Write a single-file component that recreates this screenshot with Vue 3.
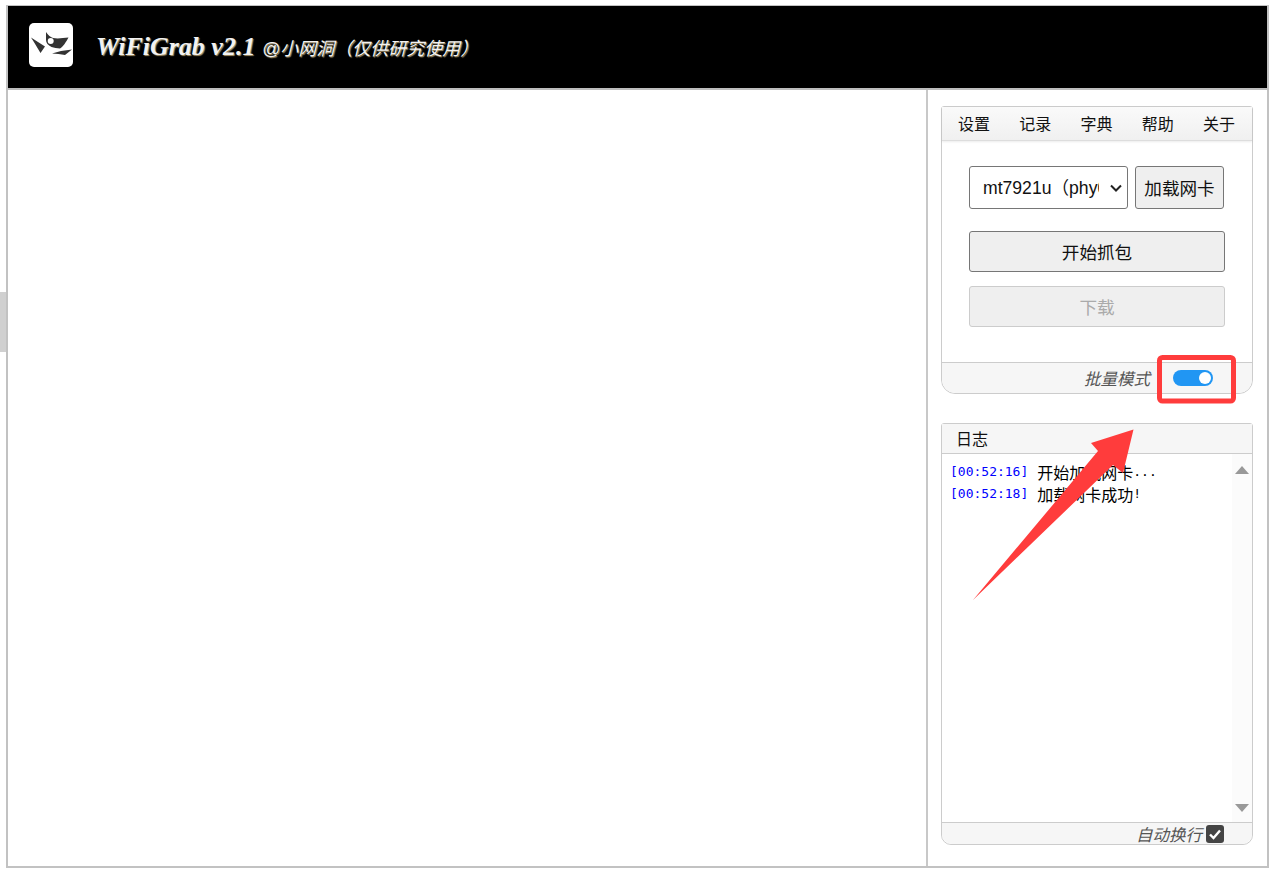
<script setup>
const tabs = ['设置', '记录', '字典', '帮助', '关于']
const logs = [
  { time: '[00:52:16]', msg: '开始加载网卡', tail: '...' },
  { time: '[00:52:18]', msg: '加载网卡成功', tail: '!' }
]
</script>

<template>
  <div class="page">
    <div class="frame">
      <header class="header">
        <div class="logo">
          <svg width="44" height="44" viewBox="0 0 44 44">
            <path fill="#333" d="M2 14.500 L16 23.500 L11.500 30 C8 24 5 19 2 14.500 Z" />
            <path fill="#333" d="M17 9 C19 12 21 14 24 15 C29 16 34 15 39.500 14.500 C37 19 34 24 31 25.500 C28 25 25 25 22.500 24 C19 22 17 20 17 17 Z" />
            <circle cx="21.700" cy="18" r="3" fill="#fff" />
            <path fill="#333" d="M23 30.500 L32 28 L43 26.500 L36 32 C32 31 27 31 23 30.500 Z" />
          </svg>
        </div>
        <h1 class="title">WiFiGrab v2.1 <small>@小网洞（仅供研究使用）</small></h1>
      </header>
      <div class="body">
        <main class="main"></main>
        <aside class="side">
          <section class="panel control">
            <nav class="tabs">
              <span v-for="t in tabs" :key="t">{{ t }}</span>
            </nav>
            <div class="control-body">
              <div class="row">
                <div class="select-wrap">
                  <select class="select">
                    <option>mt7921u（phy0）</option>
                  </select>
                  <svg class="chevron" width="12" height="8" viewBox="0 0 12 8"><path d="M1 1.500 L6 6.500 L11 1.500" fill="none" stroke="#222" stroke-width="2" /></svg>
                </div>
                <button class="btn load">加载网卡</button>
              </div>
              <button class="btn wide">开始抓包</button>
              <button class="btn wide disabled" disabled>下载</button>
            </div>
            <footer class="panel-foot batch">
              <em>批量模式</em>
              <span class="switch"><i></i></span>
            </footer>
          </section>
          <section class="panel log">
            <div class="log-head">日志</div>
            <div class="log-body">
              <div class="log-lines">
                <div v-for="l in logs" :key="l.time" class="line"><span class="mono time">{{ l.time }}</span><span class="msg">{{ l.msg }}</span><span class="mono">{{ l.tail }}</span></div>
              </div>
              <div class="scroll">
                <svg width="14" height="8" viewBox="0 0 14 8"><path d="M7 0 L14 8 H0 Z" fill="#999" /></svg>
                <svg width="14" height="8" viewBox="0 0 14 8"><path d="M0 0 H14 L7 8 Z" fill="#999" /></svg>
              </div>
            </div>
            <footer class="panel-foot wrap">
              <em>自动换行</em>
              <span class="check">
                <svg width="18" height="18" viewBox="0 0 18 18"><path d="M4 9.500 L7.500 13 L14 5.500" fill="none" stroke="#fff" stroke-width="2.400" /></svg>
              </span>
            </footer>
          </section>
        </aside>
      </div>
    </div>
    <div class="grip"></div>
    <svg class="overlay" width="1274" height="874" viewBox="0 0 1274 874">
      <rect x="1159.500" y="357.500" width="74" height="43.500" rx="3" fill="none" stroke="#ff3c3c" stroke-width="5" />
      <path d="M1133.500 429.500 L1091 443 L1098 451 L973 600 L1113 465 L1123 473 Z" fill="#ff3c3c" />
    </svg>
  </div>
</template>

<style>
html, body { margin: 0; background: #fff; }
</style>

<style scoped>
.page {
  position: relative;
  width: 1274px;
  height: 874px;
  box-sizing: border-box;
  padding: 5px 5px 6px 6px;
  font-family: "Liberation Sans", "Noto Sans CJK SC", sans-serif;
  color: #111;
  overflow: hidden;
}
.frame {
  height: 100%;
  box-sizing: border-box;
  border: 2px solid #c2c2c2;
  border-top-width: 1px;
  display: flex;
  flex-direction: column;
}
.header {
  height: 82px;
  flex: none;
  background: #000;
  border-bottom: 2px solid #bdbdbd;
  display: flex;
  align-items: center;
  padding-left: 21px;
  gap: 23px;
}
.logo {
  width: 44px;
  height: 44px;
  background: #fff;
  border-radius: 5px;
  margin-bottom: 4px;
}
.title {
  margin: 0;
  font: italic bold 26px "Liberation Serif", "Noto Sans CJK SC", serif;
  color: #f2f2f2;
  text-shadow: 1px 1px 1px #a89468;
}
.title small {
  font: italic 400 18px "Liberation Sans", "Noto Sans CJK SC", sans-serif;
}
.body { flex: 1; display: flex; min-height: 0; }
.main { flex: 1; }
.side {
  width: 341px;
  flex: none;
  box-sizing: border-box;
  border-left: 2px solid #c8c8c8;
  padding: 16px 14px 21px 13px;
  display: flex;
  flex-direction: column;
  gap: 29px;
}
.panel {
  border: 1px solid #ccc;
  border-radius: 3px;
  display: flex;
  flex-direction: column;
}
.control { height: 288px; flex: none; box-sizing: border-box; border-radius: 3px 3px 14px 14px; }
.tabs {
  height: 34px;
  box-sizing: border-box;
  flex: none;
  background: linear-gradient(#fafafa, #f0f0f0);
  border-bottom: 1px solid #ddd;
  box-shadow: 0 1px 2px rgba(0,0,0,.08);
  display: flex;
  align-items: center;
  justify-content: space-between;
  padding: 3px 17px 0 16px;
  font-size: 16px;
  line-height: 20px;
}
.control-body {
  flex: 1;
  padding: 25px 27px 0;
  display: flex;
  flex-direction: column;
  align-items: stretch;
}
.row { display: flex; gap: 7px; margin-bottom: 22px; }
.select-wrap { position: relative; width: 159px; height: 43px; }
.select {
  appearance: none;
  width: 100%;
  height: 100%;
  box-sizing: border-box;
  background: #fff;
  border: 1px solid #767676;
  border-radius: 3px;
  font: 17.600px "Liberation Sans", "Noto Sans CJK SC", sans-serif;
  padding: 0 28px 0 13px;
  color: #111;
}
.chevron { position: absolute; left: 141px; top: 18px; pointer-events: none; }
.btn {
  background: #efefef;
  border: 1px solid #767676;
  border-radius: 3px;
  font: 17.600px "Liberation Sans", "Noto Sans CJK SC", sans-serif;
  color: #111;
  padding: 0;
}
.load { width: 89px; height: 43px; }
.wide { height: 41px; width: 256px; margin-bottom: 14px; }
.disabled { color: #aaa; border-color: #ccc; }
.panel-foot {
  background: #f6f6f6;
  border-top: 1px solid #ccc;
  display: flex;
  align-items: center;
  justify-content: flex-end;
  color: #555;
  font-size: 16.500px;
}
.batch {
  height: 30px;
  border-radius: 0 0 14px 14px;
  padding-right: 39px;
  gap: 23px;
}
.switch {
  width: 40px;
  height: 16px;
  border-radius: 8px;
  background: #2196f3;
  position: relative;
}
.switch i {
  position: absolute;
  right: 2px;
  top: 2px;
  width: 12px;
  height: 12px;
  border-radius: 50%;
  background: #fff;
}
.log { flex: 1; min-height: 0; border-radius: 3px 3px 10px 10px; }
.log-head {
  height: 29px;
  flex: none;
  background: #f6f6f6;
  border-bottom: 1px solid #ccc;
  padding-left: 14px;
  font-size: 16px;
  line-height: 31px;
}
.log-body { flex: 1; display: flex; min-height: 0; }
.log-lines {
  flex: 1;
  padding: 7px 8px;
  color: #000;
}
.line { height: 22px; line-height: 22px; font-size: 16px; display: flex; align-items: center; }
.mono { font: 13px/22px "DejaVu Sans Mono", monospace; }
.msg { font: 16px/22px "Noto Sans CJK SC", sans-serif; }
.time { color: #0000ff; margin-right: 9px; }
.scroll {
  width: 20px;
  flex: none;
  background: #fbfbfb;
  display: flex;
  flex-direction: column;
  justify-content: space-between;
  align-items: center;
  padding: 12px 0 10px;
}
.wrap { height: 21px; border-radius: 0 0 10px 10px; padding-right: 28px; gap: 4px; }
.check {
  width: 18px;
  height: 18px;
  background: #444;
  border-radius: 3px;
  display: block;
}
.grip {
  position: absolute;
  left: 0;
  top: 292px;
  width: 6px;
  height: 60px;
  background: #d0d0d0;
}
.overlay { position: absolute; left: 0; top: 0; pointer-events: none; }
</style>
